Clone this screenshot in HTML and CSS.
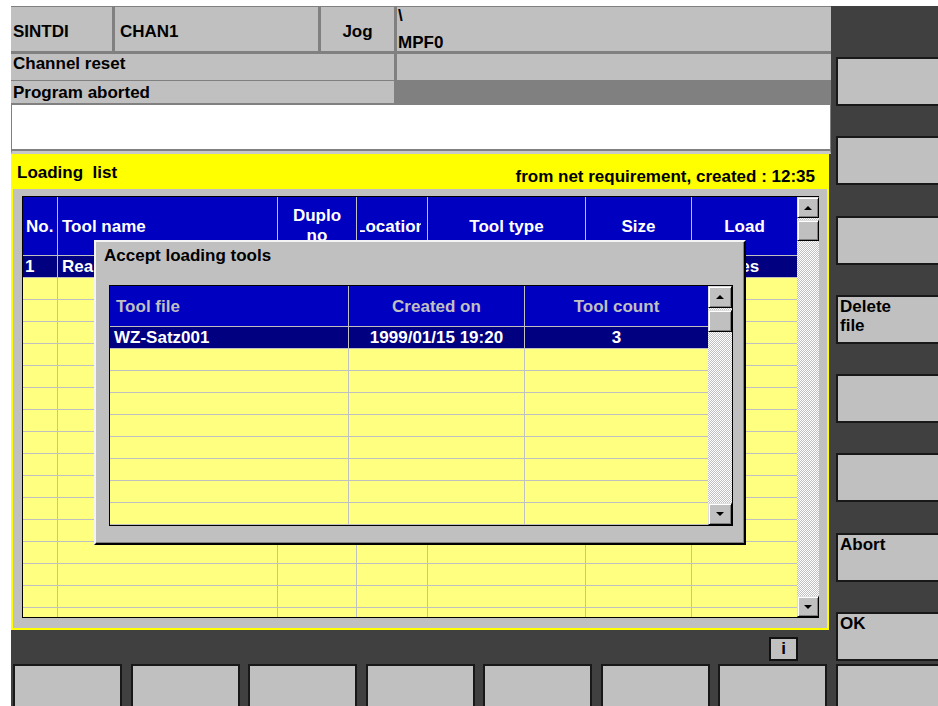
FILE: index.html
```html
<!DOCTYPE html>
<html lang="en">
<head>
<meta charset="utf-8">
<title>Loading list</title>
<link rel="stylesheet" href="styles.css">
</head>
<body>
<div class="screen">
  <div class="main">
    <div class="status-row status-top">
      <div class="cell">SINTDI</div>
      <div class="cell chan">CHAN1</div>
      <div class="cell mode">Jog</div>
      <div class="cell path"><span>\</span><span class="prog">MPF0</span></div>
    </div>
    <div class="status-row msg-row first">
      <div class="cell">Channel reset</div>
      <div class="cell"></div>
    </div>
    <div class="status-row msg-row second">
      <div class="cell">Program aborted</div>
      <div class="cell dim"></div>
    </div>
    <div class="message-box"></div>

    <div class="panel">
      <div class="panel-head">
        <span class="panel-title">Loading&nbsp; list</span>
        <span class="panel-info">from net requirement, created : 12:35</span>
      </div>

      <div class="list">
        <div class="grid main-grid">
          <div class="grid-head">
            <div class="hc left no">No.</div>
            <div class="hc left">Tool name</div>
            <div class="hc two-line">Duplo<br>no</div>
            <div class="hc"><div class="clip">Location</div></div>
            <div class="hc">Tool type</div>
            <div class="hc">Size</div>
            <div class="hc">Load</div>
          </div>
          <div class="grid-body">
            <div class="row sel"><div class="c no">1</div><div class="c">Reamer_12</div><div class="c mid">1</div><div class="c mid">12</div><div class="c mid">Reamer</div><div class="c mid">normal</div><div class="c mid">Yes</div></div>
            <div class="row"><div class="c"></div><div class="c"></div><div class="c"></div><div class="c"></div><div class="c"></div><div class="c"></div><div class="c"></div></div>
            <div class="row"><div class="c"></div><div class="c"></div><div class="c"></div><div class="c"></div><div class="c"></div><div class="c"></div><div class="c"></div></div>
            <div class="row"><div class="c"></div><div class="c"></div><div class="c"></div><div class="c"></div><div class="c"></div><div class="c"></div><div class="c"></div></div>
            <div class="row"><div class="c"></div><div class="c"></div><div class="c"></div><div class="c"></div><div class="c"></div><div class="c"></div><div class="c"></div></div>
            <div class="row"><div class="c"></div><div class="c"></div><div class="c"></div><div class="c"></div><div class="c"></div><div class="c"></div><div class="c"></div></div>
            <div class="row"><div class="c"></div><div class="c"></div><div class="c"></div><div class="c"></div><div class="c"></div><div class="c"></div><div class="c"></div></div>
            <div class="row"><div class="c"></div><div class="c"></div><div class="c"></div><div class="c"></div><div class="c"></div><div class="c"></div><div class="c"></div></div>
            <div class="row"><div class="c"></div><div class="c"></div><div class="c"></div><div class="c"></div><div class="c"></div><div class="c"></div><div class="c"></div></div>
            <div class="row"><div class="c"></div><div class="c"></div><div class="c"></div><div class="c"></div><div class="c"></div><div class="c"></div><div class="c"></div></div>
            <div class="row"><div class="c"></div><div class="c"></div><div class="c"></div><div class="c"></div><div class="c"></div><div class="c"></div><div class="c"></div></div>
            <div class="row"><div class="c"></div><div class="c"></div><div class="c"></div><div class="c"></div><div class="c"></div><div class="c"></div><div class="c"></div></div>
            <div class="row"><div class="c"></div><div class="c"></div><div class="c"></div><div class="c"></div><div class="c"></div><div class="c"></div><div class="c"></div></div>
            <div class="row"><div class="c"></div><div class="c"></div><div class="c"></div><div class="c"></div><div class="c"></div><div class="c"></div><div class="c"></div></div>
            <div class="row"><div class="c"></div><div class="c"></div><div class="c"></div><div class="c"></div><div class="c"></div><div class="c"></div><div class="c"></div></div>
            <div class="row"><div class="c"></div><div class="c"></div><div class="c"></div><div class="c"></div><div class="c"></div><div class="c"></div><div class="c"></div></div>
            <div class="row"><div class="c"></div><div class="c"></div><div class="c"></div><div class="c"></div><div class="c"></div><div class="c"></div><div class="c"></div></div>
          </div>
        </div>
        <div class="scrollbar main-sb">
          <div class="sb-btn"><svg width="8" height="4" viewBox="0 0 8 4"><path d="M4 0L8 4H0Z"/></svg></div>
          <div class="sb-thumb"></div>
          <div class="sb-track"></div>
          <div class="sb-btn"><svg width="8" height="4" viewBox="0 0 8 4"><path d="M0 0H8L4 4Z"/></svg></div>
        </div>
      </div>

      <div class="dialog">
        <div class="dialog-title">Accept loading tools</div>
        <div class="list dlg-list">
          <div class="grid dlg-grid">
            <div class="grid-head">
              <div class="hc left">Tool file</div>
              <div class="hc">Created on</div>
              <div class="hc">Tool count</div>
            </div>
            <div class="grid-body">
              <div class="row sel"><div class="c">WZ-Satz001</div><div class="c mid">1999/01/15 19:20</div><div class="c mid">3</div></div>
              <div class="row"><div class="c"></div><div class="c"></div><div class="c"></div></div>
              <div class="row"><div class="c"></div><div class="c"></div><div class="c"></div></div>
              <div class="row"><div class="c"></div><div class="c"></div><div class="c"></div></div>
              <div class="row"><div class="c"></div><div class="c"></div><div class="c"></div></div>
              <div class="row"><div class="c"></div><div class="c"></div><div class="c"></div></div>
              <div class="row"><div class="c"></div><div class="c"></div><div class="c"></div></div>
              <div class="row"><div class="c"></div><div class="c"></div><div class="c"></div></div>
              <div class="row"><div class="c"></div><div class="c"></div><div class="c"></div></div>
            </div>
          </div>
          <div class="scrollbar dlg-sb">
            <div class="sb-btn"><svg width="8" height="4" viewBox="0 0 8 4"><path d="M4 0L8 4H0Z"/></svg></div>
            <div class="sb-thumb"></div>
            <div class="sb-track"></div>
            <div class="sb-btn"><svg width="8" height="4" viewBox="0 0 8 4"><path d="M0 0H8L4 4Z"/></svg></div>
          </div>
        </div>
      </div>
    </div>

    <div class="info-row"><div class="info-key">i</div></div>
  </div>

  <div class="vkeys">
    <div class="key vkey"></div>
    <div class="key vkey"></div>
    <div class="key vkey"></div>
    <div class="key vkey">Delete<br>file</div>
    <div class="key vkey"></div>
    <div class="key vkey"></div>
    <div class="key vkey">Abort</div>
    <div class="key vkey">OK</div>
  </div>

  <div class="hkeys">
    <div class="key hkey"></div>
    <div class="key hkey"></div>
    <div class="key hkey"></div>
    <div class="key hkey"></div>
    <div class="key hkey"></div>
    <div class="key hkey"></div>
    <div class="key hkey"></div>
    <div class="key hkey"></div>
  </div>
</div>
</body>
</html>
```

FILE: styles.css
```css
* { box-sizing: border-box; }

html, body {
  margin: 0;
  padding: 0;
  background: #fff;
  overflow: hidden;
}

body {
  font: bold 17px/19px "Liberation Sans", Arial, sans-serif;
  color: #000;
}

/* ---------- operator panel frame ---------- */
.screen {
  margin: 6px 0 0 11px;
  width: 927px;
  height: 700px;
  background: #404040;
  display: grid;
  grid-template-columns: 820px 107px;
  grid-template-rows: 658px 42px;
  overflow: hidden;
}

.main {
  display: flex;
  flex-direction: column;
}

/* ---------- status header ---------- */
.status-row {
  display: grid;
  column-gap: 3px;
  background: #808080;
  flex: none;
}

.status-row .cell {
  background: #c0c0c0;
  white-space: nowrap;
  overflow: hidden;
}

.status-top {
  grid-template-columns: 101px 203px 73px 1fr;
  height: 47px;
  padding: 1px 0 2px;
}

.status-top .cell { padding: 15px 0 0 2px; }
.status-top .chan { padding-left: 5px; }
.status-top .mode { text-align: center; padding-left: 0; }

.status-top .path {
  padding: 0 0 0 1px;
  line-height: 17px;
}
.status-top .path span { display: block; }
.status-top .path .prog { margin-top: 10px; }

.msg-row { grid-template-columns: 383px 1fr; }
.msg-row .cell { padding-left: 2px; }
.msg-row.first { height: 28px; padding: 1px 0; }
.msg-row.second { height: 23px; padding: 0 0 1px; }
.msg-row.second .cell { padding-top: 2px; }
.msg-row .cell.dim { background: #808080; }

.message-box {
  flex: none;
  height: 50px;
  background: #fff;
  border: 1px solid #808080;
  border-bottom: 3px solid #c8c8c8;
  box-shadow: inset 0 -2px 0 #808080;
}

/* ---------- loading list panel ---------- */
.panel {
  flex: none;
  position: relative;
  height: 476px;
  margin-right: 2px;
  border: 2px solid #ffff00;
  background: #c0c0c0;
  padding: 0 8px 10px 9px;
  display: flex;
  flex-direction: column;
}

.panel-head {
  height: 33px;
  margin: 0 -8px 0 -9px;
  padding: 0 12px 0 4px;
  background: #ffff00;
  display: flex;
  justify-content: space-between;
  align-items: flex-start;
  white-space: nowrap;
}
.panel-title { margin-top: 7px; }
.panel-info { margin-top: 11px; }

/* ---------- list tables ---------- */
.list {
  display: flex;
  border: 1px solid #000;
  background: #c0c0c0;
  flex: none;
}

.main-grid-wrap { }

.panel > .list {
  margin-top: 7px;
  height: 422px;
  border-right: 0;
}

.grid {
  display: flex;
  flex-direction: column;
  flex: none;
  overflow: hidden;
}

.grid-head,
.row { display: grid; }

.grid-head {
  flex: none;
  background: #0000c0;
  color: #fff;
  border-bottom: 1px solid #c0c0c0;
}

.hc {
  display: flex;
  align-items: center;
  justify-content: center;
  text-align: center;
  border-right: 1px solid #c0c0c0;
  white-space: nowrap;
  overflow: hidden;
  padding: 0 4px;
}
.hc:last-child { border-right: 0; }
.hc.left { justify-content: flex-start; }
.hc.no { padding-left: 3px; }
.hc.two-line { line-height: 20px; }

.hc .clip {
  display: flex;
  justify-content: center;
  overflow: hidden;
  width: 100%;
  margin: 0 2px 0 -1px;
}

.grid-body {
  flex: none;
  overflow: hidden;
  background: #ffff80;
}

.row {
  height: 22px;
  border-bottom: 1px solid #c0c0c0;
  line-height: 21px;
}

.row .c {
  border-right: 1px solid #c0c0c0;
  padding: 0 4px;
  white-space: nowrap;
  overflow: hidden;
}
.row .c:last-child { border-right: 0; }
.row .c.no { padding-left: 2px; }
.row .c.mid { text-align: center; }

.row.sel {
  background: #000080;
  color: #fff;
}

/* main list geometry */
.main-grid { width: 774px; }
.main-grid .grid-head,
.main-grid .row {
  grid-template-columns: 35px 220px 79px 71px 158px 106px 105px;
}
.main-grid .grid-head { height: 59px; }
.main-grid .grid-body { height: 361px; }

/* ---------- scrollbars ---------- */
.scrollbar {
  display: flex;
  flex-direction: column;
  flex: none;
  background: repeating-conic-gradient(#c0c0c0 0 25%, #ffffff 0 50%) 0 0 / 2px 2px;
}

.sb-btn,
.sb-thumb {
  flex: none;
  background: #c0c0c0;
  border: 1px solid;
  border-color: #dfdfdf #000 #000 #dfdfdf;
  box-shadow: inset 1px 1px 0 #fff, inset -1px -1px 0 #808080;
}

.sb-btn {
  display: flex;
  align-items: center;
  justify-content: center;
}
.sb-btn svg { display: block; fill: #000; }

.sb-track { flex: 1; }

.main-sb { width: 22px; }
.main-sb .sb-btn { height: 21px; }
.main-sb .sb-thumb { height: 21px; margin-top: 2px; }

/* ---------- accept dialog ---------- */
.dialog {
  position: absolute;
  left: 81px;
  top: 84px;
  width: 652px;
  height: 305px;
  background: #c0c0c0;
  border: 2px solid;
  border-color: #f4f4f4 #000 #000 #f4f4f4;
  box-shadow: inset -1px -1px 0 #808080;
  padding: 0 11px 0 13px;
}

.dialog-title {
  height: 43px;
  padding: 4px 0 0 0;
  margin-left: -5px;
  white-space: nowrap;
}

.dlg-list {
  width: 624px;
  height: 241px;
}

.dlg-grid { width: 598px; }
.dlg-grid .grid-head,
.dlg-grid .row {
  grid-template-columns: 239px 176px 183px;
}
.dlg-grid .grid-head {
  height: 41px;
  color: #c0c0c0;
}
.dlg-grid .hc.left { padding-left: 6px; }
.dlg-grid .grid-body { height: 198px; }

.dlg-sb { width: 24px; }
.dlg-sb .sb-btn { height: 22px; }
.dlg-sb .sb-thumb { height: 22px; margin-top: 2px; }

/* ---------- info key ---------- */
.info-row {
  flex: none;
  height: 34px;
  display: flex;
  justify-content: flex-end;
  padding: 7px 33px 0 0;
}

.info-key {
  width: 29px;
  height: 24px;
  border: 2px solid #111;
  background: #c0c0c0;
  text-align: center;
  line-height: 20px;
}

/* ---------- softkeys ---------- */
.key {
  flex: none;
  background: #c0c0c0;
  border: 2px solid #181818;
  white-space: nowrap;
}

.vkeys {
  grid-column: 2;
  grid-row: 1;
  padding-top: 51px;
  display: flex;
  flex-direction: column;
  gap: 30.25px;
  align-items: flex-start;
}

.vkey {
  width: 110px;
  height: 49px;
  margin-left: 5px;
  padding: 0 0 0 2px;
}

.hkeys {
  grid-column: 1 / -1;
  grid-row: 2;
  display: flex;
  gap: 8.57px;
  padding-left: 2px;
  align-items: flex-start;
}

.hkey {
  width: 109px;
  height: 50px;
}
```
